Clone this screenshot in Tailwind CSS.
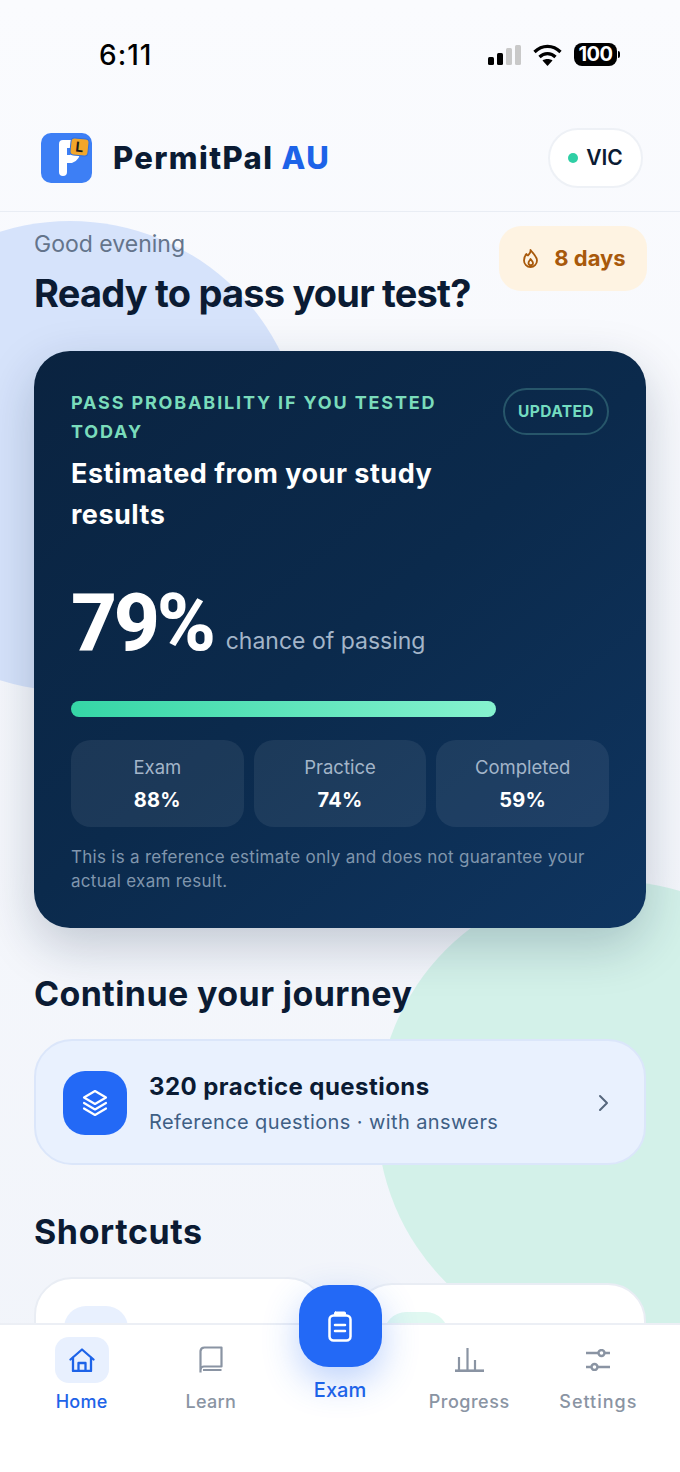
<!DOCTYPE html>
<html lang="en">
<head>
  <meta charset="UTF-8" />
  <title>PermitPal AU</title>
  <script src="https://cdn.jsdelivr.net/npm/@tailwindcss/browser@4"></script>
</head>
<body class="bg-white font-['Inter',sans-serif] text-[#0b1b33]">
  <div class="relative w-[680px] h-[1472px] overflow-hidden bg-[linear-gradient(180deg,#fafbfe_0%,#f1f4fa_100%)]">
    <!-- background blobs -->
    <div class="absolute left-[-165px] top-[221px] w-[470px] h-[470px] rounded-full bg-[#d6e3fb]"></div>
    <div class="absolute left-[377px] top-[881px] w-[470px] h-[470px] rounded-full bg-[#d3f1e9]"></div>

    <!-- status bar -->
    <div class="relative h-[110px] flex items-start justify-between pt-[37px] pl-[99px] pr-[60px]">
      <span class="text-[28px] leading-9 font-medium tracking-[1px] text-black">6:11</span>
      <div class="flex items-center pt-[6px]">
        <svg width="33" height="20" viewBox="0 0 33 20" class="mr-[12px]">
          <rect x="0" y="12" width="6" height="8" rx="1.500" fill="#000"/>
          <rect x="9" y="8" width="6" height="12" rx="1.500" fill="#000"/>
          <rect x="18" y="3" width="6" height="17" rx="1.500" fill="#c9c9c9"/>
          <rect x="27" y="0" width="6" height="20" rx="1.500" fill="#c9c9c9"/>
        </svg>
        <svg width="29" height="22" viewBox="0 0 29 22" fill="none" stroke="#000" stroke-width="3.200" class="mr-[12px]">
          <path d="M1.500 8 C9 0.500 20 0.500 27.500 8"/>
          <path d="M6.500 13 C11 8.500 18 8.500 22.500 13"/>
          <path d="M14.500 22 L9.500 16.500 C12 14.500 17 14.500 19.500 16.500 Z" fill="#000" stroke="none"/>
        </svg>
        <div class="flex items-center">
          <div class="w-[43px] h-[23px] rounded-[8px] bg-black text-white text-[20px] leading-[23px] font-bold text-center tracking-[-0.5px]">100</div>
          <div class="w-[2px] h-[7px] ml-[1px] rounded-r bg-black"></div>
        </div>
      </div>
    </div>

    <!-- app header -->
    <header class="relative h-[102px] pl-[41px] pr-[37px] pb-[5px] flex items-center justify-between border-b border-[#e9edf4]">
      <div class="flex items-center gap-[21px]">
        <div class="relative w-[51px] h-[50px] rounded-[10px] bg-[#3d7ff5]">
          <svg class="absolute left-[18px] top-[7px]" width="30" height="36" viewBox="0 0 30 36" fill="none" stroke="#fff" stroke-width="8" stroke-linecap="round" stroke-linejoin="round"><path d="M4 32V4h8a8 8 0 0 1 0 15H4"/></svg>
          <div class="absolute left-[29px] top-[5px] w-[19px] h-[18px] rounded-[4px] bg-[#f2a62b] border border-[#2f6fe0] flex items-center justify-center rotate-[6deg] text-[14px] leading-none font-bold text-[#1a1a1a]">L</div>
        </div>
        <div class="text-[31px] leading-10 font-extrabold tracking-[1.4px] text-[#0b1b33]">PermitPal <span class="text-[#1d63e8]">AU</span></div>
      </div>
      <div class="h-[60px] w-[95px] rounded-full bg-white border-2 border-[#eef1f6] flex items-center justify-center gap-[8px]">
        <span class="w-[10px] h-[10px] rounded-full bg-[#2fcfa5]"></span>
        <span class="text-[21px] font-semibold text-[#0b1b33]">VIC</span>
      </div>
    </header>

    <main class="relative px-[34px]">
      <!-- greeting -->
      <div class="flex justify-between items-start h-[139px]">
        <div>
          <p class="text-[23px] leading-[28px] text-[#64748b] mt-[18px]">Good evening</p>
          <h1 class="text-[38px] leading-[48px] font-bold mt-[11px] tracking-[-0.8px]">Ready to pass your test?</h1>
        </div>
        <div class="mt-[14px] w-[148px] h-[65px] rounded-[22px] bg-[#fef3e2] flex items-center justify-center gap-[16px] mr-[-1px] pl-[3px]">
          <svg width="15" height="19" viewBox="0 0 15 19" fill="none" stroke="#a8590b" stroke-width="1.800" stroke-linecap="round" stroke-linejoin="round"><path d="M7.500 1c.5 2.500-1 3.500-2.500 5.500-.8 0-1.200-.8-1.500-1.500C2 6.500 1 9 1 11.500a6.500 6.500 0 0 0 13 0C14 7.500 10 4.500 7.500 1z"/><path d="M7.500 10c-.5 1.500-2 2-2 4a2.200 2.200 0 0 0 4.500 0c0-1.500-1.500-2.500-2.500-4z"/></svg>
          <span class="text-[22px] font-bold text-[#a8590b]">8 days</span>
        </div>
      </div>

      <!-- probability card -->
      <section class="w-[612px] h-[577px] rounded-[36px] bg-[linear-gradient(140deg,#0a2340_0%,#0b2a4c_50%,#0f3560_100%)] px-[37px] pt-[37px] shadow-[0_18px_50px_rgba(15,35,70,0.22)]">
        <div class="flex justify-between items-start">
          <div class="w-[400px]">
            <p class="text-[18px] leading-[29px] font-bold tracking-[1.850px] text-[#7adcbb]">PASS PROBABILITY IF YOU TESTED TODAY</p>
            <p class="text-[27px] leading-[41px] font-bold tracking-[0.5px] text-white mt-[7px]">Estimated from your study results</p>
          </div>
          <div class="w-[106px] h-[47px] rounded-full border-2 border-[#27566a] flex items-center justify-center text-[15.500px] font-bold tracking-[0.4px] text-[#74dcc0]">UPDATED</div>
        </div>
        <div class="flex items-end mt-[40px] gap-[13px]">
          <span class="text-[80px] leading-[96px] font-extrabold text-white tracking-[-3.300px] font-['Roboto']">79%</span>
          <span class="text-[23px] leading-[32px] text-[#a3b5c9] mb-[14px]">chance of passing</span>
        </div>
        <div class="w-[425px] h-4 rounded-full mt-[30px] bg-[linear-gradient(90deg,#35d6a6,#86f2cf)]"></div>
        <div class="grid grid-cols-3 gap-[10px] mt-[23px]">
          <div class="h-[87px] rounded-[20px] bg-white/[0.07] flex flex-col items-center pt-[15px]">
            <span class="text-[18.500px] leading-6 text-[#a3b5c9]">Exam</span>
            <span class="text-[20px] leading-7 font-bold tracking-[0.2px] text-white mt-[7px]">88%</span>
          </div>
          <div class="h-[87px] rounded-[20px] bg-white/[0.07] flex flex-col items-center pt-[15px]">
            <span class="text-[18.500px] leading-6 text-[#a3b5c9]">Practice</span>
            <span class="text-[20px] leading-7 font-bold tracking-[0.2px] text-white mt-[7px]">74%</span>
          </div>
          <div class="h-[87px] rounded-[20px] bg-white/[0.07] flex flex-col items-center pt-[15px]">
            <span class="text-[18.500px] leading-6 text-[#a3b5c9]">Completed</span>
            <span class="text-[20px] leading-7 font-bold tracking-[0.2px] text-white mt-[7px]">59%</span>
          </div>
        </div>
        <p class="text-[17px] leading-[23.500px] tracking-[0.28px] text-[#8096ad] mt-[19px]">This is a reference estimate only and does not guarantee your actual exam result.</p>
      </section>

      <h2 class="text-[34px] leading-[44px] font-bold tracking-[0.4px] mt-[44px]">Continue your journey</h2>

      <div class="mt-[23px] w-[612px] h-[126px] rounded-[38px] bg-[#e9f1fe] border-2 border-[#dbe6fa] flex items-center pl-[27px] pr-[34px] pt-[2px]">
        <div class="w-[64px] h-[64px] rounded-[22px] bg-[#2369f6] flex items-center justify-center">
          <svg width="30" height="30" viewBox="0 0 30 30" fill="none" stroke="#fff" stroke-width="2.200" stroke-linejoin="round" stroke-linecap="round">
            <path d="M15 3l11 6.500-11 6.500-11-6.500z"/>
            <path d="M4 15l11 6.500L26 15"/>
            <path d="M4 20.500l11 6.500 11-6.500"/>
          </svg>
        </div>
        <div class="ml-[22px] flex-1">
          <p class="text-[24px] leading-[32px] font-bold tracking-[0.45px] text-[#0b1b33]">320 practice questions</p>
          <p class="text-[20px] leading-[28px] tracking-[0.4px] text-[#3f5f85] mt-[5px]">Reference questions · with answers</p>
        </div>
        <svg width="12" height="18" viewBox="0 0 12 18" fill="none" stroke="#56677d" stroke-width="2" stroke-linecap="round" stroke-linejoin="round"><path d="M2 2l7 7-7 7"/></svg>
      </div>

      <h2 class="text-[34px] leading-[44px] font-bold tracking-[0.6px] mt-[45px]">Shortcuts</h2>
    </main>

    <!-- shortcut cards, clipped by the tab bar -->
    <div class="absolute left-[34px] top-[1277px] w-[292px] h-[120px] rounded-[38px] bg-white border-2 border-[#e9edf4] pl-[28px] pt-[27px]">
      <div class="w-[64px] h-[64px] rounded-[22px] bg-[#e8f0fe]"></div>
    </div>
    <div class="absolute left-[354px] top-[1283px] w-[292px] h-[120px] rounded-[38px] bg-white border-2 border-[#e9edf4] pl-[28px] pt-[27px]">
      <div class="w-[64px] h-[64px] rounded-[22px] bg-[#e0f8f1]"></div>
    </div>

    <!-- tab bar -->
    <nav class="absolute left-0 right-0 top-[1323px] h-[149px] bg-white border-t-2 border-[#eceff5] px-[17px] grid grid-cols-5">
      <a class="flex flex-col items-center pt-[12px]">
        <div class="w-[54px] h-[46px] rounded-[14px] bg-[#e8f0fe] flex items-center justify-center">
          <svg width="26" height="24" viewBox="0 0 26 24" fill="none" stroke="#1d63e8" stroke-width="2.300" stroke-linejoin="round" stroke-linecap="round"><path d="M1.500 11.500L13 1.500l11.500 10"/><path d="M4 10v13h18V10"/><path d="M9.500 23v-8h7v8"/></svg>
        </div>
        <span class="text-[18px] leading-6 font-medium tracking-[0.2px] text-[#1d63e8] mt-[7px]">Home</span>
      </a>
      <a class="flex flex-col items-center pt-[12px]">
        <div class="w-[54px] h-[46px] flex items-center justify-center">
          <svg width="24" height="28" viewBox="0 0 24 28" fill="none" stroke="#8a94a3" stroke-width="2.200" stroke-linejoin="round"><path d="M1.500 26.500V5a4 4 0 0 1 4-3.500h17v19H5a3.500 3.500 0 0 0-3.500 3.500M4 24h18.500"/></svg>
        </div>
        <span class="text-[18px] leading-6 font-medium tracking-[0.3px] text-[#8a94a3] mt-[7px]">Learn</span>
      </a>
      <a class="relative flex flex-col items-center">
        <div class="absolute top-[-40px] ml-[1px] w-[83px] h-[82px] rounded-[30px] bg-[#2369f6] flex items-center justify-center shadow-[0_14px_36px_rgba(35,105,246,0.3)]">
          <svg width="24" height="31" viewBox="0 0 24 31" fill="none" stroke="#fff" stroke-width="2.500" stroke-linecap="round" stroke-linejoin="round"><rect x="1.500" y="4.500" width="21" height="25" rx="4"/><rect x="6.500" y="1" width="11" height="3.500" rx="1" fill="#fff" stroke-width="1"/><path d="M7 14h10M7 20h10"/></svg>
        </div>
        <span class="text-[20px] leading-6 font-medium text-[#1d63e8] mt-[53px]">Exam</span>
      </a>
      <a class="flex flex-col items-center pt-[12px]">
        <div class="w-[54px] h-[46px] flex items-center justify-center">
          <svg width="29" height="24" viewBox="0 0 29 24" fill="none" stroke="#8a94a3" stroke-width="2.200"><path d="M0 22.700h29" stroke-width="2.600"/><path d="M4 22V9M12.500 22V0M20 22V12"/></svg>
        </div>
        <span class="text-[18px] leading-6 font-medium tracking-[0.5px] text-[#8a94a3] mt-[7px]">Progress</span>
      </a>
      <a class="flex flex-col items-center pt-[12px]">
        <div class="w-[54px] h-[46px] flex items-center justify-center">
          <svg width="24" height="22" viewBox="0 0 24 22" fill="none" stroke="#8a94a3" stroke-width="2.400"><path d="M0 4h12M19 4h5M0 18h5M12 18h12"/><circle cx="15.500" cy="4" r="3"/><circle cx="8.500" cy="18" r="3"/></svg>
        </div>
        <span class="text-[18px] leading-6 font-medium tracking-[1px] text-[#8a94a3] mt-[7px]">Settings</span>
      </a>
    </nav>
  </div>
</body>
</html>
